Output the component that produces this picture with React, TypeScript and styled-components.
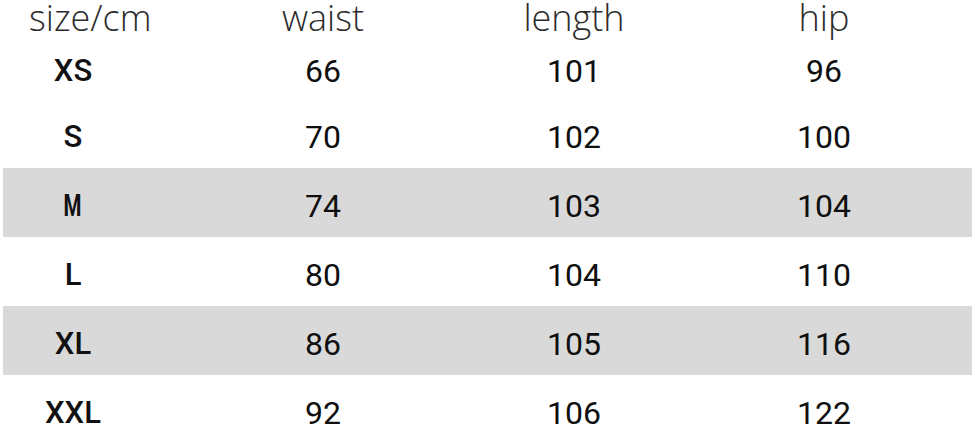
import * as React from 'react'
import styled, { createGlobalStyle } from 'styled-components'

const GlobalStyle = createGlobalStyle`
  html, body {
    margin: 0;
    padding: 0;
    background: #fff;
  }
`

const Table = styled.div`
  width: 969px;
  margin: 0 3px;
  height: 431px;
  overflow: hidden;
`

const Row = styled.div<{ $shaded?: boolean; $height: number }>`
  display: grid;
  grid-template-columns: 140px 360px 142px 358px;
  align-items: center;
  height: ${p => p.$height}px;
  background: ${p => (p.$shaded ? '#d9d9d9' : 'transparent')};
`

const HeadRow = styled(Row)`
  align-items: start;
`

const HeadCell = styled.div<{ $shift?: number }>`
  text-align: center;
  padding-left: ${p => p.$shift || 0}px;
  font-family: 'Open Sans', 'Liberation Sans', sans-serif;
  font-weight: 300;
  font-size: 36px;
  line-height: 36px;
  color: #2b2b2b;
  white-space: nowrap;
`

const SizeCell = styled.div`
  text-align: center;
  padding-top: 6px;
  font-family: Roboto, 'Liberation Sans', sans-serif;
  font-weight: 500;
  font-size: 31px;
  line-height: 1;
  color: #111;
`

const SizeLabel = styled.span<{ $narrow?: boolean }>`
  display: inline-block;
  font-weight: ${p => (p.$narrow ? 700 : 500)};
  transform: ${p => (p.$narrow ? 'scaleX(0.66)' : 'none')};
`

const ValueCell = styled.div`
  text-align: center;
  padding-top: 6px;
  font-family: Roboto, 'Liberation Sans', sans-serif;
  font-weight: 400;
  font-size: 32px;
  line-height: 1;
  color: #0f0f0f;
`

const rows = [
  { size: 'XS', waist: 66, length: 101, hip: 96, height: 63 },
  { size: 'S', waist: 70, length: 102, hip: 100, height: 69 },
  { size: 'M', waist: 74, length: 103, hip: 104, height: 69, shaded: true, narrow: true },
  { size: 'L', waist: 80, length: 104, hip: 110, height: 69 },
  { size: 'XL', waist: 86, length: 105, hip: 116, height: 69, shaded: true },
  { size: 'XXL', waist: 92, length: 106, hip: 122, height: 69 },
]

export default function App() {
  return (
    <>
      <GlobalStyle />
      <Table>
        <HeadRow $height={36}>
          <HeadCell $shift={26}>size/cm</HeadCell>
          <HeadCell>waist</HeadCell>
          <HeadCell>length</HeadCell>
          <HeadCell>hip</HeadCell>
        </HeadRow>
        {rows.map(r => (
          <Row key={r.size} $height={r.height} $shaded={r.shaded}>
            <SizeCell>
              <SizeLabel $narrow={r.narrow}>{r.size}</SizeLabel>
            </SizeCell>
            <ValueCell>{r.waist}</ValueCell>
            <ValueCell>{r.length}</ValueCell>
            <ValueCell>{r.hip}</ValueCell>
          </Row>
        ))}
      </Table>
    </>
  )
}
